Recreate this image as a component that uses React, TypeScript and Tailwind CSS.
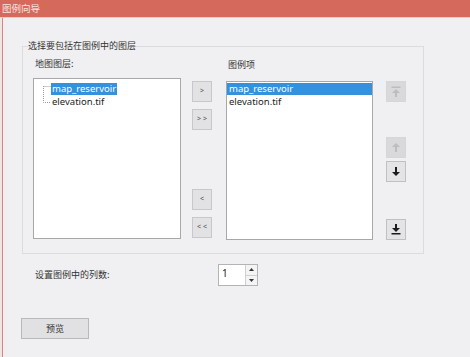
import React from 'react';

const cjk = { fontFamily: '"Noto Sans CJK SC", "Noto Sans", sans-serif' };
const latin = { fontFamily: '"Noto Sans", "Noto Sans CJK SC", sans-serif' };

function SmallButton({ label, className = '' }: { label: string; className?: string }) {
  return (
    <div
      className={`flex h-[21px] w-[20px] items-center justify-center border border-[#c8c8ca] bg-[#e2e2e4] text-[7px] text-[#555] ${className}`}
      style={latin}
    >
      {label}
    </div>
  );
}

function IconButton({ kind, disabled, className = '' }: { kind: 'top' | 'up' | 'down' | 'bottom'; disabled?: boolean; className?: string }) {
  const fill = disabled ? '#bdbdbf' : '#1b1b1b';
  return (
    <div
      className={`flex h-[21px] w-[20px] items-center justify-center border ${
        disabled ? 'border-[#d6d6d8] bg-[#d9d9db]' : 'border-[#c0c0c2] bg-[#e4e4e6]'
      } ${className}`}
    >
      <svg width="10" height="11" viewBox="0 0 10 11">
        {kind === 'down' && <path d="M4 1h2v5h3l-4 4-4-4h3z" fill={fill} />}
        {kind === 'up' && <path d="M4 10h2V5h3L5 1 1 5h3z" fill={fill} />}
        {kind === 'bottom' && (
          <>
            <path d="M4 0h2v4h3l-4 4-4-4h3z" fill={fill} />
            <rect x="0.5" y="9" width="9" height="1.5" fill={fill} />
          </>
        )}
        {kind === 'top' && (
          <>
            <rect x="0.5" y="0.5" width="9" height="1.5" fill={fill} />
            <path d="M4 11h2V7h3L5 3 1 7h3z" fill={fill} />
          </>
        )}
      </svg>
    </div>
  );
}

export default function App() {
  return (
    <div className="flex h-[357px] w-[470px] flex-col overflow-hidden bg-[#f0eff2]">
      <div className="flex h-[17px] shrink-0 items-center bg-[#d5695b] pl-[2px] text-[9.5px] text-[#fbe4e0]" style={cjk}>
        图例向导
      </div>
      <div className="h-px shrink-0 bg-[#f4c8c1]" />
      <div className="flex flex-1">
        <div className="w-[3px] shrink-0 border-r border-[#d4877c] bg-[#f3e5e3]" />
        <div className="flex flex-1 flex-col">
          {/* group box */}
          <div className="relative ml-[19px] mt-[28px] h-[208px] w-[402px] border border-[#dcdbe0]">
            <span
              className="absolute left-[5px] top-[-7px] bg-[#f0eff2] text-[9px] leading-[12px] text-[#333]"
              style={cjk}
            >
              选择要包括在图例中的图层
            </span>
            <div className="flex pl-[10px]">
              {/* map layers */}
              <div className="flex w-[148px] flex-col pt-[11px]">
                <div className="pl-[2px] text-[9px] leading-[12px] text-[#333]" style={cjk}>
                  地图图层:
                </div>
                <div className="mt-[8px] h-[161px] border border-[#a8a8aa] bg-white pt-[4px]">
                  <div className="flex">
                    <svg width="9" height="22" viewBox="0 0 9 22" className="ml-[8px] mt-[2px]">
                      <path d="M1.5 1V17.5H9" stroke="#9a9a9a" strokeDasharray="1 1" fill="none" />
                      <path d="M1.5 1.5H9" stroke="#9a9a9a" strokeDasharray="1 1" fill="none" />
                    </svg>
                    <div className="flex flex-col">
                      <span className="bg-[#3391de] px-[1px] text-[9.5px] leading-[12px] text-white" style={latin}>
                        map_reservoir
                      </span>
                      <span className="mt-[1px] px-[1px] text-[9.5px] leading-[12px] text-[#222]" style={latin}>
                        elevation.tif
                      </span>
                    </div>
                  </div>
                </div>
              </div>
              {/* add / remove buttons */}
              <div className="ml-[11px] flex flex-col pt-[34px]">
                <SmallButton label=">" />
                <SmallButton label="> >" className="mt-[7px]" />
                <SmallButton label="<" className="mt-[59px]" />
                <SmallButton label="< <" className="mt-[7px]" />
              </div>
              {/* legend items */}
              <div className="ml-[14px] flex w-[147px] flex-col pt-[12px]">
                <div className="pl-[2px] text-[9px] leading-[12px] text-[#333]" style={cjk}>
                  图例项
                </div>
                <div className="mt-[10px] h-[159px] border border-[#a8a8aa] bg-white pt-[1px]">
                  <div className="bg-[#3391de] px-[2px] text-[9.5px] leading-[12px] text-white" style={latin}>
                    map_reservoir
                  </div>
                  <div className="mt-[1px] px-[2px] text-[9.5px] leading-[12px] text-[#222]" style={latin}>
                    elevation.tif
                  </div>
                </div>
              </div>
              {/* order buttons */}
              <div className="ml-[13px] flex flex-col pt-[34px]">
                <IconButton kind="top" disabled />
                <IconButton kind="up" disabled className="mt-[35px]" />
                <IconButton kind="down" className="mt-[3px]" />
                <IconButton kind="bottom" className="mt-[37px]" />
              </div>
            </div>
          </div>
          {/* columns */}
          <div className="mt-[10px] flex items-center pl-[32px]">
            <div className="w-[183px] text-[9px] text-[#333]" style={cjk}>
              设置图例中的列数:
            </div>
            <div className="flex h-[22px] w-[40px] border border-[#b4b4b6] bg-white">
              <div className="flex-1 pl-[3px] pt-[2px] text-[10px] leading-[12px] text-[#222]" style={latin}>
                1
              </div>
              <div className="flex w-[12px] flex-col border-l border-[#d0d0d2]">
                <div className="flex flex-1 items-center justify-center border-b border-[#d0d0d2] bg-[#f4f4f5]">
                  <svg width="5" height="3" viewBox="0 0 5 3"><path d="M0 3L2.5 0 5 3z" fill="#333" /></svg>
                </div>
                <div className="flex flex-1 items-center justify-center bg-[#f4f4f5]">
                  <svg width="5" height="3" viewBox="0 0 5 3"><path d="M0 0h5L2.5 3z" fill="#333" /></svg>
                </div>
              </div>
            </div>
          </div>
          {/* preview */}
          <div
            className="ml-[18px] mt-[32px] flex h-[21px] w-[68px] items-center justify-center border border-[#b9b9bb] bg-[#e1e1e3] text-[9px] text-[#333]"
            style={cjk}
          >
            预览
          </div>
        </div>
      </div>
    </div>
  );
}
